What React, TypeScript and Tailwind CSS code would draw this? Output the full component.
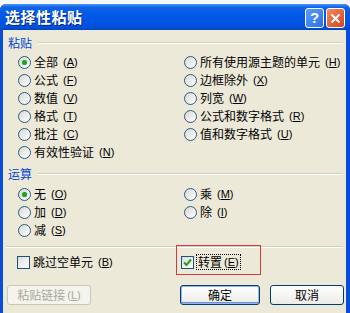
import React from "react";

const cjk = '"Noto Sans CJK SC", "Liberation Sans", sans-serif';

function Key({ k }: { k: string }) {
  return (
    <span className="ml-[2px] text-[11px] font-['Liberation_Sans']">
      (<span className="underline underline-offset-1">{k}</span>)
    </span>
  );
}

function Radio({ checked }: { checked?: boolean }) {
  return (
    <span className="flex w-[13px] h-[13px] shrink-0 items-center justify-center rounded-full border border-[#2a5a8a] bg-[linear-gradient(135deg,#d8d8d2,#ffffff)]">
      {checked && <span className="w-[5px] h-[5px] rounded-full bg-[#21a121] shadow-[0_0_1px_#5fd25f]" />}
    </span>
  );
}

function Check({ checked }: { checked?: boolean }) {
  return (
    <span className="flex w-[13px] h-[13px] shrink-0 items-center justify-center border border-[#1c5180] bg-[linear-gradient(135deg,#dcdcd7,#ffffff)]">
      {checked && (
        <svg width="9" height="9" viewBox="0 0 9 9">
          <path d="M1 4.5 L3.5 7 L8 1.5" stroke="#21a121" strokeWidth="2" fill="none" />
        </svg>
      )}
    </span>
  );
}

function Opt({ label, k, checked }: { label: string; k: string; checked?: boolean }) {
  return (
    <div className="h-[18px] flex items-center gap-[3px]">
      <Radio checked={checked} />
      <span className="leading-none">{label}</span>
      <Key k={k} />
    </div>
  );
}

function Group({ title }: { title: string }) {
  return (
    <div className="h-[16px] flex items-center pl-[5px] pr-[3px]">
      <span className="text-[#0046d5] leading-none">{title}</span>
      <div className="flex-1 ml-[6px] border-t border-[#d0d0bf] border-b border-b-white" />
    </div>
  );
}

export default function App() {
  return (
    <div className="w-[350px] h-[313px] overflow-hidden bg-white text-[12px] text-black" style={{ fontFamily: cjk }}>
      <div className="h-[4px] bg-[#f4f6fa]" />

      <div className="h-[309px] flex flex-col bg-[#0a4ed8] rounded-t-[6px] px-[3px] pr-[4px]">
        {/* title bar */}
        <div className="h-[26px] -mx-[3px] -mr-[4px] px-[5px] flex items-center rounded-t-[6px] bg-[linear-gradient(to_bottom,#4a98f8_0%,#1063e6_12%,#0058e8_45%,#0052dc_85%,#0046c4_100%)]">
          <span className="flex-1 text-white font-bold text-[15px] tracking-[0.5px] [text-shadow:1px_1px_0_#0a2a80]">选择性粘贴</span>
          <div className="flex gap-[2px] mt-[2px]">
            <div className="w-[19px] h-[20px] rounded-[3px] border border-white bg-[linear-gradient(135deg,#5a9bff,#2e6fe8)] flex items-center justify-center text-white font-bold text-[15px] font-['Liberation_Sans']">?</div>
            <div className="w-[19px] h-[20px] rounded-[3px] border border-white bg-[linear-gradient(135deg,#f08a5e,#d9431c)] flex items-center justify-center">
              <svg width="11" height="11" viewBox="0 0 11 11">
                <path d="M1.5 1.5 L9.5 9.5 M9.5 1.5 L1.5 9.5" stroke="white" strokeWidth="2" />
              </svg>
            </div>
          </div>
        </div>

        {/* body */}
        <div className="flex-1 flex flex-col bg-[#ece9d8] pt-[5px]">
          <Group title="粘贴" />
          <div className="grid grid-cols-[166px_1fr] pl-[15px] mt-[2px]">
            <div className="flex flex-col">
              <Opt label="全部" k="A" checked />
              <Opt label="公式" k="F" />
              <Opt label="数值" k="V" />
              <Opt label="格式" k="T" />
              <Opt label="批注" k="C" />
              <Opt label="有效性验证" k="N" />
            </div>
            <div className="flex flex-col">
              <Opt label="所有使用源主题的单元" k="H" />
              <Opt label="边框除外" k="X" />
              <Opt label="列宽" k="W" />
              <Opt label="公式和数字格式" k="R" />
              <Opt label="值和数字格式" k="U" />
            </div>
          </div>

          <div className="mt-[5px]">
            <Group title="运算" />
          </div>
          <div className="grid grid-cols-[166px_1fr] pl-[15px] mt-[3px]">
            <div className="flex flex-col">
              <Opt label="无" k="O" checked />
              <Opt label="加" k="D" />
              <Opt label="减" k="S" />
            </div>
            <div className="flex flex-col">
              <Opt label="乘" k="M" />
              <Opt label="除" k="I" />
            </div>
          </div>

          <div className="mt-[7px] mx-[3px] border-t border-[#d0d0bf] border-b border-b-white" />

          <div className="grid grid-cols-[162px_1fr] pl-[14px] mt-[5px] h-[18px]">
            <div className="flex items-center gap-[3px]">
              <Check />
              <span className="leading-none">跳过空单元</span>
              <Key k="B" />
            </div>
            <div className="relative flex items-center gap-[2px] pl-[2px]">
              <Check checked />
              <span className="flex items-center border border-dotted border-black px-[1px] h-[16px]">
                <span className="leading-none">转置</span>
                <Key k="E" />
              </span>
              <div className="absolute left-[-3px] top-[-8px] w-[85px] h-[30px] border border-[#d43a3a]" />
            </div>
          </div>

          <div className="flex mt-[14px] pl-[4px] pr-[2px]">
            <div className="w-[84px] h-[20px] rounded-[3px] border border-[#c9c7ba] bg-[#f4f3ee] flex items-center justify-center text-[#aca899]">
              粘贴链接<Key k="L" />
            </div>
            <div className="flex-1" />
            <div className="w-[80px] h-[20px] rounded-[3px] border border-[#003c74] bg-[linear-gradient(to_bottom,#ffffff,#ecebe6)] shadow-[inset_0_0_0_1px_#98b8ea,inset_0_-1px_0_1px_#6a8fd8] flex items-center justify-center">
              确定
            </div>
            <div className="w-[74px] h-[20px] ml-[10px] rounded-[3px] border border-[#003c74] bg-[linear-gradient(to_bottom,#ffffff,#ecebe6)] flex items-center justify-center">
              取消
            </div>
          </div>
          <div className="flex-1" />
        </div>
      </div>
    </div>
  );
}
